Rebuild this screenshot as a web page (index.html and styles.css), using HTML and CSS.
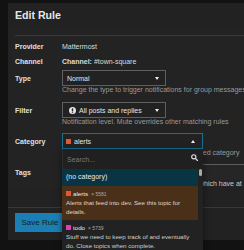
FILE: index.html
```html
<!DOCTYPE html>
<html>
<head>
<meta charset="utf-8">
<link rel="stylesheet" href="styles.css">
</head>
<body>
<div class="modal">
  <div class="modal-header"><h3 class="title">Edit Rule</h3></div>
  <div class="modal-body">
    <div class="sep"></div>
    <div class="row info first-info"><div class="label">Provider</div><div class="value">Mattermost</div></div>
    <div class="row info"><div class="label">Channel</div><div class="value"><b>Channel:</b> #town-square</div></div>

    <div class="field f-type">
      <div class="label">Type</div>
      <div class="select short"><span class="sel-text">Normal</span><span class="caret down"></span></div>
      <div class="help">Change the type to trigger notifications for group messages or mentions</div>
    </div>

    <div class="field f-filter">
      <div class="label">Filter</div>
      <div class="select short">
        <svg class="ico" width="7" height="7" viewBox="0 0 8 8"><circle cx="4" cy="4" r="4" fill="#e6e6e6"/><rect x="3.2" y="1.6" width="1.6" height="3.2" fill="#222"/><rect x="3.2" y="5.4" width="1.6" height="1.2" fill="#222"/></svg>
        <span class="sel-text">All posts and replies</span><span class="caret down"></span>
      </div>
      <div class="help">Notification level. Mute overrides other matching rules</div>
    </div>

    <div class="field f-cat">
      <div class="label">Category</div>
      <div class="cat-wrap">
        <div class="select wide open">
          <span class="sq orange"></span><span class="sel-text">alerts</span><span class="caret up"></span>
        </div>
        <div class="dropdown">
          <div class="search">
            <span class="placeholder">Search...</span>
            <svg class="mag" width="7" height="7" viewBox="0 0 10 10"><circle cx="4" cy="4" r="3" fill="none" stroke="#e0e0e0" stroke-width="1.6"/><line x1="6.2" y1="6.2" x2="9.2" y2="9.2" stroke="#e0e0e0" stroke-width="1.8" stroke-linecap="round"/></svg>
          </div>
          <div class="opt none">(no category)</div>
          <div class="opt hl">
            <div class="opt-title"><span class="sq orange"></span><span class="name">alerts</span><span class="count">× 5581</span></div>
            <div class="desc">Alerts that feed into dev. See this topic for details.</div>
          </div>
          <div class="opt">
            <div class="opt-title"><span class="sq pink"></span><span class="name">todo</span><span class="count">× 5739</span></div>
            <div class="desc">Stuff we need to keep track of and eventually do. Close topics when complete.</div>
          </div>
          <div class="thumb"></div>
        </div>
      </div>
      <div class="help">This rule will only apply to topics in the specified category</div>
    </div>

    <div class="field f-tags">
      <div class="label">Tags</div>
      <div class="tags-input"></div>
      <div class="help light">If specified, this rule will only apply to topics which have at least one of these tags</div>
    </div>
  </div>
  <div class="modal-footer">
    <button class="btn-primary">Save Rule</button>
  </div>
</div>
</body>
</html>
```

FILE: styles.css
```css
html, body {
  margin: 0;
  padding: 0;
  overflow: hidden;
  background: #121212;
  font-family: "Liberation Sans", Arial, sans-serif;
  color: #dddddd;
}
body {
  padding: 3px 0 0 8px;
  height: 250px;
  box-sizing: border-box;
}
.modal {
  width: 300px;
  height: 237px;
  background: #222222;
  display: flex;
  flex-direction: column;
}
.modal-header {
  height: 24px;
  padding-left: 7px;
  display: flex;
  align-items: center;
}
.title {
  margin: 0;
  font-size: 10.6px;
  font-weight: bold;
  color: #e8e8e8;
}
.modal-body {
  padding: 8px 0 0 7px;
  background: #232323;
  flex: 1;
}
.sep {
  height: 1px;
  background: #3a3a3a;
}
.row.info {
  display: flex;
  align-items: center;
  height: 15px;
  font-size: 7px;
}
.first-info { margin-top: 3px; }
.label {
  width: 47px;
  flex: none;
  font-weight: bold;
  font-size: 7px;
  color: #e0e0e0;
}
.value { color: #dcdcdc; }
.value b { font-weight: bold; }

.field {
  display: grid;
  grid-template-columns: 47px auto;
  font-size: 7px;
}
.field .label { grid-row: 1; grid-column: 1; align-self: center; }
.field .help {
  grid-row: 2;
  grid-column: 2;
  line-height: 8px;
  height: 8px;
  color: #9a9a9a;
  white-space: nowrap;
}
.field .help.light { color: #c8c8c8; }
.f-type { margin-top: 1px; }
.f-filter { margin-top: 8px; }
.f-cat { margin-top: 7px; }
.f-tags { margin-top: 7px; }

.select {
  grid-row: 1;
  grid-column: 2;
  box-sizing: border-box;
  height: 16px;
  border: 1px solid #5e5e5e;
  background: #222;
  display: flex;
  align-items: center;
  padding: 0 6px 0 3px;
  color: #e6e6e6;
}
.select.short { width: 104px; }
.select.wide { width: 141px; }
.select.open { border-color: #1d6e8f; }
.sel-text { margin-left: 1px; }
.ico { margin: 0 2px 0 3px; }
.caret {
  margin-left: auto;
  width: 0;
  height: 0;
  border-left: 2.5px solid transparent;
  border-right: 2.5px solid transparent;
}
.caret.down { border-top: 3px solid #eee; }
.caret.up { border-bottom: 3px solid #eee; margin-right: 1px; }
.sq {
  display: inline-block;
  width: 5px;
  height: 5px;
  margin-right: 2px;
  flex: none;
}
.sq.orange { background: #e45735; }
.sq.pink { background: #e03cb8; }

.cat-wrap {
  grid-row: 1;
  grid-column: 2;
  position: relative;
}
.dropdown {
  position: absolute;
  top: 100%;
  left: 0;
  width: 141px;
  height: 110px;
  background: #222;
  z-index: 5;
  overflow: hidden;
  box-shadow: 0 2px 6px rgba(0,0,0,0.5);
}
.search {
  height: 20px;
  display: flex;
  align-items: center;
  padding: 0 5px 0 4px;
  border-left: 1px solid #2e2e2e;
  background: #202020;
}
.placeholder { color: #777; font-size: 7px; }
.mag { margin-left: auto; margin-top: -3px; }
.opt {
  padding: 3px 4px 4px;
  font-size: 6.2px;
  color: #d0d0d0;
  margin-right: 5px;
}
.opt.none {
  background: #093444;
  font-size: 7px;
  line-height: 10px;
  color: #e8e8e8;
}
.opt.hl { background: #4a3019; color: #e0d6cc; }
.opt-title {
  display: flex;
  align-items: center;
  height: 9px;
}
.name { font-size: 6.2px; color: #ececec; margin-right: 3px; }
.count { font-size: 5px; color: #aaa; }
.desc { line-height: 9px; }
.thumb {
  position: absolute;
  right: 1px;
  top: 20px;
  width: 3px;
  height: 7px;
  border-radius: 2px;
  background: #a8a8a8;
}

.tags-input {
  grid-row: 1;
  grid-column: 2;
  box-sizing: border-box;
  height: 16px;
  width: 200px;
  border-top: 1px solid #5e5e5e;
  background: #262626;
}

.modal-footer {
  border-top: 1px solid #383838;
  padding: 5px 7px 8px;
  margin-top: 19px;
  flex: none;
}
.btn-primary {
  font-family: "Liberation Sans", Arial, sans-serif;
  font-size: 8px;
  height: 19px;
  width: 50px;
  padding: 0;
  border: none;
  background: #1a7fb5;
  color: #1c1c1c;
  display: flex;
  align-items: center;
  justify-content: center;
}
```
